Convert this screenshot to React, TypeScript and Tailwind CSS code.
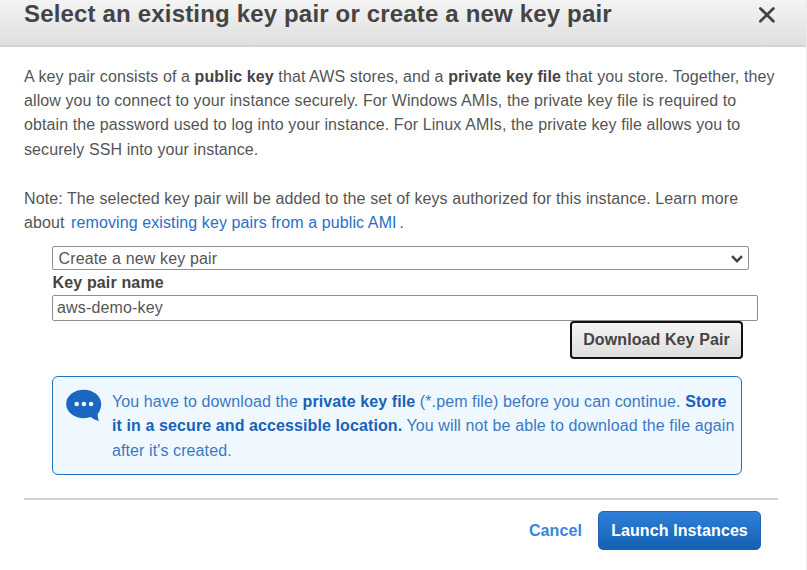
import { useState } from 'react';

function ChatIcon() {
  return (
    <svg width="36" height="33" viewBox="0 0 36 33" className="shrink-0">
      <path
        d="M17.700 .8C8 .8.200 7 .200 15s7.800 14.200 17.500 14.200c2.500 0 4.800-.4 6.900-1.100 2.400 1.900 5.200 3.200 8.500 4.100-1.200-2.500-1.500-5-1.300-7.400 2.100-2.600 3.400-6 3.400-9.800C35.200 7 27.400.8 17.700.8z"
        fill="#1b66c0"
      />
      <circle cx="10.700" cy="15" r="2.300" fill="#f0f8ff" />
      <circle cx="17.900" cy="15" r="2.300" fill="#f0f8ff" />
      <circle cx="25.100" cy="15" r="2.300" fill="#f0f8ff" />
    </svg>
  );
}

export default function App() {
  const [keyName, setKeyName] = useState('aws-demo-key');

  return (
    <div className="flex h-[570px] w-[807px] overflow-hidden bg-[#ececec] font-['Liberation_Sans',Arial,sans-serif] text-[16px] leading-[24.4px] tracking-[0.1px] text-[#555]">
      <div className="flex w-[806px] flex-col bg-white">
        <header className="flex h-[47px] shrink-0 items-start justify-between border-b-2 border-[#d3d3d3] bg-linear-to-b from-[#f4f4f4] to-[#dfdfdf] pr-[30px] pl-6">
          <h2 className="text-[24px] leading-[28px] font-bold tracking-[0.17px] whitespace-nowrap text-[#444]">
            Select an existing key pair or create a new key pair
          </h2>
          <button type="button" aria-label="Close" className="mt-[6px]">
            <svg width="18" height="18" viewBox="0 0 18 18" fill="none" stroke="#444" strokeWidth="2.8" strokeLinecap="round">
              <path d="M2.400 2.400l13 12.800M15.400 2.400l-13 12.800" />
            </svg>
          </button>
        </header>

        <main className="flex flex-col px-6 pt-[17.5px]">
          <div className="whitespace-nowrap">
            <p>
              A key pair consists of a <b className="text-[#444]">public key</b> that AWS stores, and a{' '}
              <b className="text-[#444]">private key file</b> that you store. Together, they
            </p>
            <p>allow you to connect to your instance securely. For Windows AMIs, the private key file is required to</p>
            <p>obtain the password used to log into your instance. For Linux AMIs, the private key file allows you to</p>
            <p>securely SSH into your instance.</p>
          </div>
          <div className="mt-[24.4px] whitespace-nowrap">
            <p>Note: The selected key pair will be added to the set of keys authorized for this instance. Learn more</p>
            <p>
              about <a className="ml-[2px] text-[#2a6fc9]">removing existing key pairs from a public AMI</a>
              <span className="ml-[3px]">.</span>
            </p>
          </div>

          <div className="mt-[11.1px] ml-[28px] flex flex-col">
            <button
              type="button"
              className="flex h-[24px] w-[697px] items-center justify-between rounded-[2px] border border-[#8f8f8f] bg-white pr-[5px] pl-[5.5px] pt-px tracking-[0.15px]"
            >
              <span>Create a new key pair</span>
              <svg width="12" height="8" viewBox="0 0 12 8" fill="none" stroke="#444" strokeWidth="2.4">
                <path d="M1 1.200l5 5 5-5" />
              </svg>
            </button>
            <label className="pt-px pl-[0.5px] leading-[24px] font-bold tracking-[0.15px] text-[#444]">Key pair name</label>
            <input
              value={keyName}
              onChange={(e) => setKeyName(e.target.value)}
              className="h-[26px] w-[706px] rounded-[2px] border border-[#8f8f8f] bg-white px-[4px] tracking-[0.15px] outline-none"
            />
            <button
              type="button"
              className="ml-[518px] h-[38px] w-[173px] rounded-[4px] border-2 border-[#111] bg-linear-to-b from-[#f4f4f4] to-[#dedede] font-bold whitespace-nowrap text-[#444]"
            >
              Download Key Pair
            </button>

            <div className="mt-[17px] flex h-[99px] w-[690px] rounded-[6px] border border-[#1f72bd] bg-[#f0f8ff] pt-[12px] pl-[13px] text-[#3a78c4]">
              <ChatIcon />
              <div className="ml-[10px] pt-[0.4px] whitespace-nowrap">
                <p>
                  You have to download the <b className="text-[#1562b8]">private key file</b> (*.pem file) before you can
                  continue. <b className="text-[#1562b8]">Store</b>
                </p>
                <p>
                  <b className="text-[#1562b8]">it in a secure and accessible location.</b> You will not be able to download the file again
                </p>
                <p>after it's created.</p>
              </div>
            </div>
          </div>
        </main>

        <footer className="mr-7 ml-6 mt-[23px] flex items-center justify-end border-t-2 border-[#d3d3d3] pt-[11px] pr-[17px]">
          <button type="button" className="font-bold text-[#3a86dc]">
            Cancel
          </button>
          <button
            type="button"
            className="ml-4 h-[39px] w-[163px] rounded-[5px] border border-[#1c66b5] bg-linear-to-b from-[#2f80d8] to-[#1261b3] font-bold whitespace-nowrap text-white"
          >
            Launch Instances
          </button>
        </footer>
      </div>
    </div>
  );
}
